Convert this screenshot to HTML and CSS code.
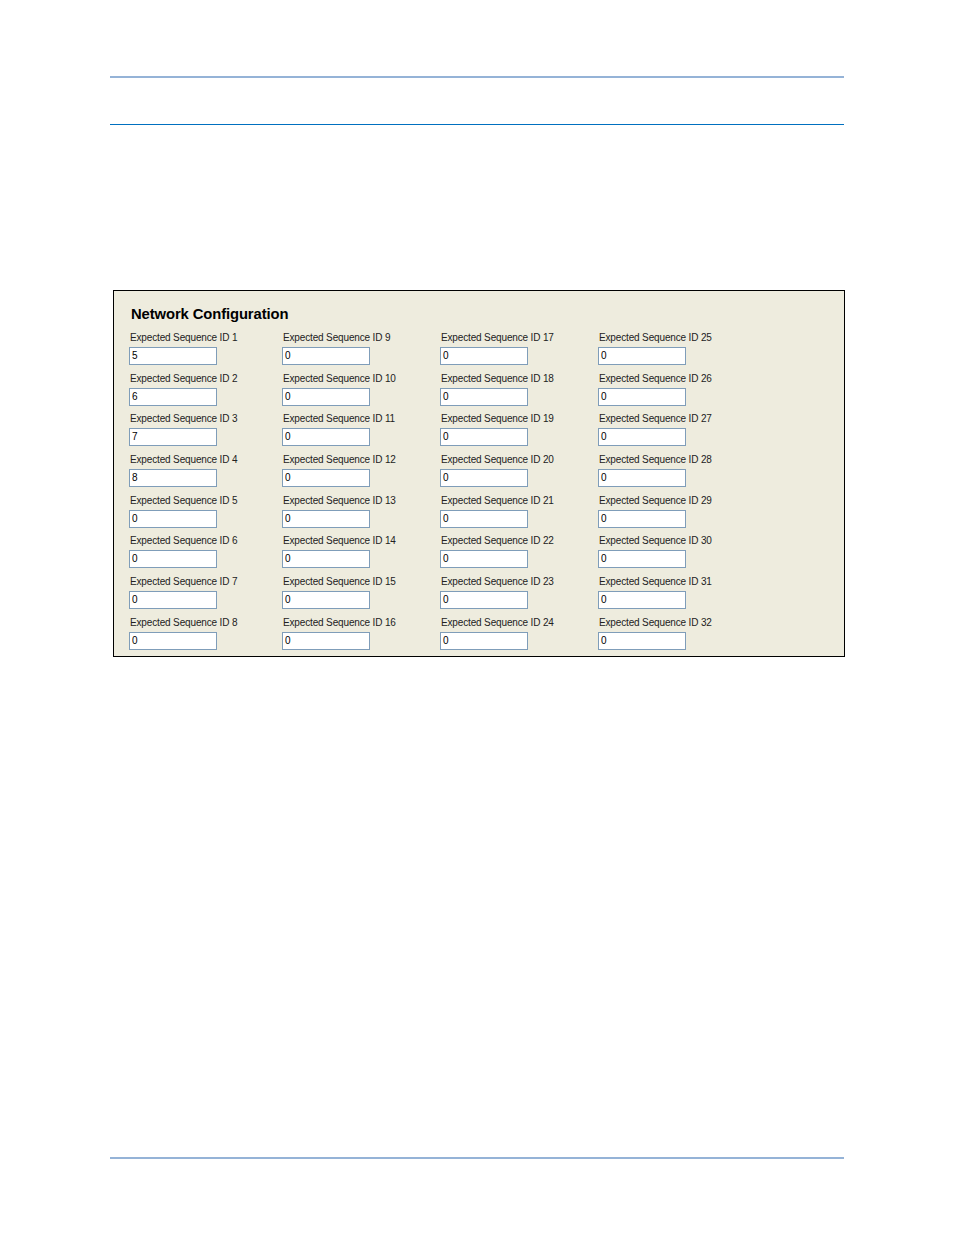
FILE: index.html
```html
<!DOCTYPE html>
<html>
<head>
<meta charset="utf-8">
<link rel="stylesheet" href="styles.css">
</head>
<body>
<div class="page">
  <div class="rule-top"></div>
  <div class="rule-blue"></div>
  <section class="panel">
    <h2 class="panel-title">Network Configuration</h2>
    <div class="grid">
      <div class="field"><div class="label">Expected Sequence ID 1</div><div class="box">5</div></div>
      <div class="field"><div class="label">Expected Sequence ID 2</div><div class="box">6</div></div>
      <div class="field"><div class="label">Expected Sequence ID 3</div><div class="box">7</div></div>
      <div class="field"><div class="label">Expected Sequence ID 4</div><div class="box">8</div></div>
      <div class="field"><div class="label">Expected Sequence ID 5</div><div class="box">0</div></div>
      <div class="field"><div class="label">Expected Sequence ID 6</div><div class="box">0</div></div>
      <div class="field"><div class="label">Expected Sequence ID 7</div><div class="box">0</div></div>
      <div class="field"><div class="label">Expected Sequence ID 8</div><div class="box">0</div></div>
      <div class="field"><div class="label">Expected Sequence ID 9</div><div class="box">0</div></div>
      <div class="field"><div class="label">Expected Sequence ID 10</div><div class="box">0</div></div>
      <div class="field"><div class="label">Expected Sequence ID 11</div><div class="box">0</div></div>
      <div class="field"><div class="label">Expected Sequence ID 12</div><div class="box">0</div></div>
      <div class="field"><div class="label">Expected Sequence ID 13</div><div class="box">0</div></div>
      <div class="field"><div class="label">Expected Sequence ID 14</div><div class="box">0</div></div>
      <div class="field"><div class="label">Expected Sequence ID 15</div><div class="box">0</div></div>
      <div class="field"><div class="label">Expected Sequence ID 16</div><div class="box">0</div></div>
      <div class="field"><div class="label">Expected Sequence ID 17</div><div class="box">0</div></div>
      <div class="field"><div class="label">Expected Sequence ID 18</div><div class="box">0</div></div>
      <div class="field"><div class="label">Expected Sequence ID 19</div><div class="box">0</div></div>
      <div class="field"><div class="label">Expected Sequence ID 20</div><div class="box">0</div></div>
      <div class="field"><div class="label">Expected Sequence ID 21</div><div class="box">0</div></div>
      <div class="field"><div class="label">Expected Sequence ID 22</div><div class="box">0</div></div>
      <div class="field"><div class="label">Expected Sequence ID 23</div><div class="box">0</div></div>
      <div class="field"><div class="label">Expected Sequence ID 24</div><div class="box">0</div></div>
      <div class="field"><div class="label">Expected Sequence ID 25</div><div class="box">0</div></div>
      <div class="field"><div class="label">Expected Sequence ID 26</div><div class="box">0</div></div>
      <div class="field"><div class="label">Expected Sequence ID 27</div><div class="box">0</div></div>
      <div class="field"><div class="label">Expected Sequence ID 28</div><div class="box">0</div></div>
      <div class="field"><div class="label">Expected Sequence ID 29</div><div class="box">0</div></div>
      <div class="field"><div class="label">Expected Sequence ID 30</div><div class="box">0</div></div>
      <div class="field"><div class="label">Expected Sequence ID 31</div><div class="box">0</div></div>
      <div class="field"><div class="label">Expected Sequence ID 32</div><div class="box">0</div></div>
    </div>
  </section>
  <div class="rule-bottom"></div>
</div>
</body>
</html>
```

FILE: styles.css
```css
html, body {
  margin: 0;
  padding: 0;
  background: #ffffff;
}
body {
  font-family: "Liberation Sans", Arial, sans-serif;
}
.page {
  width: 734px;
  margin-left: 110px;
  padding-top: 76px;
}
.rule-top {
  height: 2px;
  background: #95b3d7;
}
.rule-blue {
  margin-top: 46px;
  height: 1px;
  background: #0070c0;
}
.panel {
  margin: 165px 0 0 3px;
  width: 732px;
  box-sizing: border-box;
  background: #eeecde;
  border: 1px solid #000;
  padding: 14px 15px 6px 15px;
}
.panel-title {
  margin: 0 0 9px 2px;
  font-size: 14.8px;
  line-height: 18px;
  font-weight: bold;
  color: #000;
  letter-spacing: -0.1px;
}
.grid {
  display: grid;
  grid-template-columns: 153px 158px 158px 158px;
  grid-template-rows: repeat(8, auto);
  grid-auto-flow: column;
  row-gap: 7.7px;
}
.label {
  font-size: 10px;
  line-height: 12px;
  height: 12px;
  color: #222;
  letter-spacing: -0.15px;
  padding-left: 1px;
  white-space: nowrap;
}
.box {
  margin-top: 3px;
  width: 88px;
  height: 18px;
  box-sizing: border-box;
  background: #fff;
  border: 1px solid #7f9db9;
  font-size: 10px;
  line-height: 16px;
  padding-left: 2px;
  color: #000;
}
.rule-bottom {
  margin-top: 500px;
  height: 2px;
  background: #95b3d7;
}
```
